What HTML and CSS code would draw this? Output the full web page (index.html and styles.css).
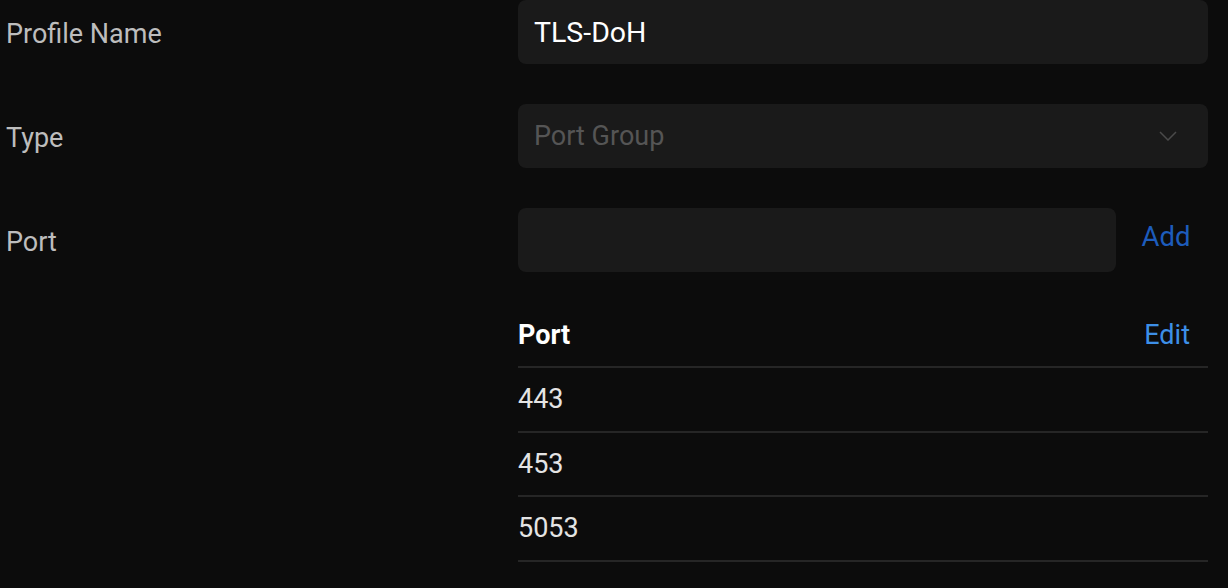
FILE: index.html
```html
<!DOCTYPE html>
<html lang="en">
<head>
<meta charset="utf-8">
<title>Profile</title>
<link rel="stylesheet" href="styles.css">
</head>
<body>
<div class="page">
  <form class="form">
    <div class="row">
      <div class="label">Profile Name</div>
      <div class="control">
        <div class="field"><span class="value">TLS-DoH</span></div>
      </div>
    </div>
    <div class="row">
      <div class="label">Type</div>
      <div class="control">
        <div class="field select">
          <span class="placeholder">Port Group</span>
          <svg class="chevron" width="18" height="10" viewBox="0 0 18 10"><path d="M1 1 L9 9 L17 1" fill="none" stroke="#4a4a4a" stroke-width="1.5"/></svg>
        </div>
      </div>
    </div>
    <div class="row">
      <div class="label">Port</div>
      <div class="control port-control">
        <div class="field grow"></div>
        <span class="add">Add</span>
      </div>
    </div>
    <div class="row table-row">
      <div class="label"></div>
      <div class="control">
        <div class="table">
          <div class="thead">
            <span class="th">Port</span>
            <span class="edit">Edit</span>
          </div>
          <div class="tr">443</div>
          <div class="tr">453</div>
          <div class="tr">5053</div>
        </div>
      </div>
    </div>
  </form>
</div>
</body>
</html>
```
FILE: styles.css
```css
html, body {
  margin: 0;
  padding: 0;
  background: #0c0c0c;
}
body {
  font-family: Roboto, "Noto Sans", sans-serif;
  font-size: 27px;
  color: #bdbdbd;
  overflow: hidden;
}
.page {
  padding: 0 20px 0 7px;
}
.form {
  display: flex;
  flex-direction: column;
  gap: 40px;
}
.row {
  display: grid;
  grid-template-columns: 511px 690px;
  align-items: center;
}
.label {
  color: #bdbdbd;
  padding-top: 3px;
  margin-left: -1px;
}
.control {
  display: flex;
  align-items: center;
}
.field {
  flex: 1;
  height: 64px;
  box-sizing: border-box;
  background: #1a1a1a;
  border-radius: 8px;
  padding: 0 16px;
  display: flex;
  align-items: center;
  justify-content: space-between;
}
.value {
  color: #ffffff;
  font-size: 28.5px;
  padding-top: 1px;
}
.placeholder {
  color: #555555;
}
.chevron {
  margin-right: 15px;
}
.add {
  width: 92px;
  box-sizing: border-box;
  padding-left: 8px;
  text-align: center;
  color: #1d5cbc;
  font-size: 27.5px;
  padding-bottom: 8px;
}
.table-row {
  margin-top: -8px;
}
.table {
  flex: 1;
  display: flex;
  flex-direction: column;
}
.thead {
  height: 62px;
  border-bottom: 2px solid #262626;
  display: flex;
  align-items: center;
  justify-content: space-between;
  padding: 0 18px 0 0;
}
.th {
  color: #ffffff;
  font-weight: 700;
}
.edit {
  color: #3d8fe8;
}
.tr {
  height: 62.5px;
  border-bottom: 2px solid #262626;
  display: flex;
  align-items: center;
  color: #e4e4e4;
}
```
